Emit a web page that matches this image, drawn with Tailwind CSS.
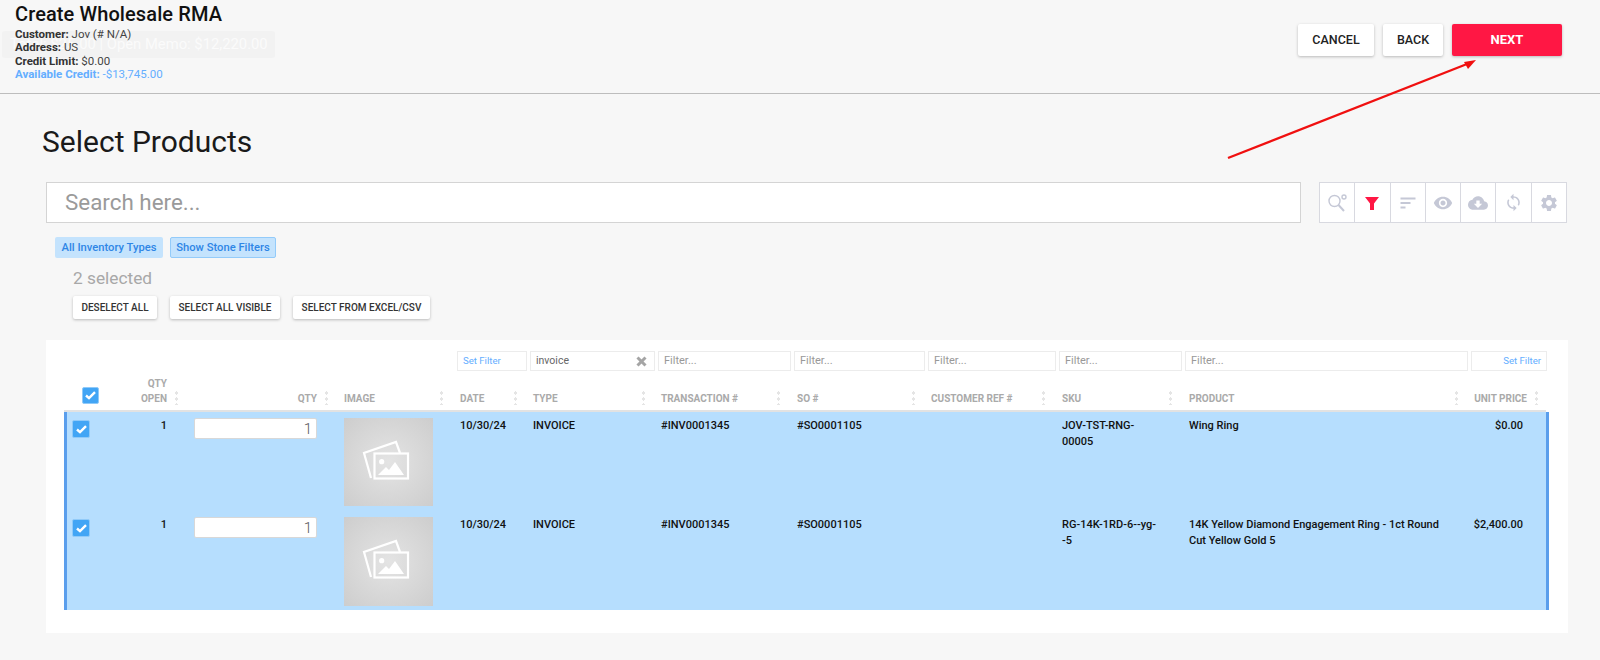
<!DOCTYPE html>
<html lang="en">
<head>
    <meta charset="UTF-8">
    <title>Create Wholesale RMA</title>
    <script src="https://cdn.jsdelivr.net/npm/@tailwindcss/browser@4"></script>
</head>
<body class="relative h-[660px] overflow-hidden bg-[#f7f7f7] font-['Roboto',sans-serif] text-[#111]">
    <!-- Page header -->
    <header class="relative flex h-[94px] justify-between border-b border-[#bdbdbd] pl-[15px] pr-[38px]">
        <div class="absolute left-[2px] top-[31px] h-[27px] w-[273px] rounded-[3px] bg-[#f2f2f2] pl-[8px] text-[14.8px] leading-[27px] text-[#fbfbfb]">Total: $25.00 | Open Memo: $12,220.00</div>
        <div class="relative pt-[3px]">
            <h2 class="text-[20px] font-medium leading-[22px] tracking-[0.1px] text-[#111]">Create Wholesale RMA</h2>
            <div class="mt-[3px] text-[11.5px] leading-[13.3px] text-[#444]">
                <p><b class="font-bold text-[#333]">Customer:</b> Jov (# N/A)</p>
                <p><b class="font-bold text-[#333]">Address:</b> US</p>
                <p><b class="font-bold text-[#333]">Credit Limit:</b> $0.00</p>
                <p class="text-[#64aeff]"><b class="font-bold">Available Credit:</b> -$13,745.00</p>
            </div>
        </div>
        <div class="flex items-start gap-[9px] pt-[24px]">
            <button class="h-[32px] w-[76px] rounded-[2px] bg-white text-[12.5px] font-medium text-[#222] shadow-[0_1px_3px_rgba(0,0,0,0.25)]">CANCEL</button>
            <button class="h-[32px] w-[60px] rounded-[2px] bg-white text-[12.5px] font-medium text-[#222] shadow-[0_1px_3px_rgba(0,0,0,0.25)]">BACK</button>
            <button class="h-[32px] w-[110px] rounded-[2px] bg-[#ff1744] text-[13px] font-bold text-white shadow-[0_1px_3px_rgba(0,0,0,0.25)]">NEXT</button>
        </div>
    </header>

    <!-- Annotation arrow -->
    <svg class="absolute left-[1220px] top-[50px]" width="270" height="115" viewBox="0 0 270 115">
        <line x1="8" y1="108" x2="247" y2="14" stroke="#f01010" stroke-width="2.4"/>
        <polygon points="256,10 244,12 248,19" fill="#f01010"/>
    </svg>

    <main class="pl-[46px] pr-[33px]">
        <h1 class="-ml-[4px] mt-[31px] text-[30px] font-normal leading-[34px] text-[#1a1a1a]">Select Products</h1>

        <div class="mt-[23px] flex justify-between">
            <input class="h-[41px] w-[1255px] border border-[#d4d4d4] bg-white pb-[1px] pl-[18px] text-[22.4px] placeholder:text-[#9a9a9a]" placeholder="Search here...">
            <div class="flex h-[41px] w-[248px] border border-[#d8d9e0] bg-white">
                <span class="flex flex-1 items-center justify-center border-r border-[#d8d9e0]">
                    <svg width="22" height="22" viewBox="0 0 22 22" fill="none" stroke="#c5c8d6" stroke-width="1.4"><circle cx="8.5" cy="9" r="5.5"/><line x1="12.5" y1="13" x2="18" y2="19" stroke-width="2"/><circle cx="18" cy="5" r="2"/></svg>
                </span>
                <span class="flex flex-1 items-center justify-center border-r border-[#d8d9e0]">
                    <svg width="14" height="14" viewBox="0 0 14 14" fill="#ff1744"><polygon points="0,1 14,1 9,7.5 9,14 5,14 5,7.5"/></svg>
                </span>
                <span class="flex flex-1 items-center justify-center border-r border-[#d8d9e0]">
                    <svg width="16" height="12" viewBox="0 0 16 12" fill="#c5c8d6"><rect x="0.5" y="0.5" width="15" height="2"/><rect x="0.5" y="5" width="10" height="2"/><rect x="0.5" y="9.5" width="5" height="2"/></svg>
                </span>
                <span class="flex flex-1 items-center justify-center border-r border-[#d8d9e0]">
                    <svg width="20" height="20" viewBox="0 0 24 24" fill="#c5c8d6"><path d="M12 4.5C7 4.5 2.73 7.61 1 12c1.73 4.39 6 7.5 11 7.5s9.27-3.11 11-7.5c-1.73-4.39-6-7.5-11-7.5zM12 17c-2.76 0-5-2.24-5-5s2.24-5 5-5 5 2.24 5 5-2.24 5-5 5zm0-8c-1.66 0-3 1.34-3 3s1.34 3 3 3 3-1.34 3-3-1.34-3-3-3z"/></svg>
                </span>
                <span class="flex flex-1 items-center justify-center border-r border-[#d8d9e0]">
                    <svg width="20" height="20" viewBox="0 0 24 24" fill="#c5c8d6"><path d="M19.35 10.04C18.67 6.59 15.64 4 12 4 9.11 4 6.6 5.64 5.35 8.04 2.34 8.36 0 10.91 0 14c0 3.31 2.69 6 6 6h13c2.76 0 5-2.24 5-5 0-2.64-2.05-4.78-4.65-4.96zM17 13l-5 5-5-5h3V9h4v4h3z"/></svg>
                </span>
                <span class="flex flex-1 items-center justify-center border-r border-[#d8d9e0]">
                    <svg width="19" height="19" viewBox="0 0 24 24" fill="#c5c8d6"><path d="M12 4V1L8 5l4 4V6c3.31 0 6 2.69 6 6 0 1.01-.25 1.97-.7 2.8l1.46 1.46C19.54 15.03 20 13.57 20 12c0-4.42-3.58-8-8-8zm0 14c-3.31 0-6-2.69-6-6 0-1.01.25-1.97.7-2.8L5.24 7.74C4.46 8.97 4 10.43 4 12c0 4.42 3.58 8 8 8v3l4-4-4-4v3z"/></svg>
                </span>
                <span class="flex flex-1 items-center justify-center">
                    <svg width="20" height="20" viewBox="0 0 24 24" fill="#c5c8d6"><path d="M19.14 12.94c.04-.3.06-.61.06-.94 0-.32-.02-.64-.07-.94l2.03-1.58c.18-.14.23-.41.12-.61l-1.92-3.32c-.12-.22-.37-.29-.59-.22l-2.39.96c-.5-.38-1.03-.7-1.62-.94l-.36-2.54c-.04-.24-.24-.41-.48-.41h-3.84c-.24 0-.43.17-.47.41l-.36 2.54c-.59.24-1.13.57-1.62.94l-2.39-.96c-.22-.08-.47 0-.59.22L2.74 8.87c-.12.21-.08.47.12.61l2.03 1.58c-.05.3-.09.63-.09.94s.02.64.07.94l-2.03 1.58c-.18.14-.23.41-.12.61l1.92 3.32c.12.22.37.29.59.22l2.39-.96c.5.38 1.03.7 1.62.94l.36 2.54c.05.24.24.41.48.41h3.84c.24 0 .44-.17.47-.41l.36-2.54c.59-.24 1.13-.56 1.62-.94l2.39.96c.22.08.47 0 .59-.22l1.92-3.32c.12-.22.07-.47-.12-.61l-2.01-1.58zM12 15.6c-1.98 0-3.6-1.62-3.6-3.6s1.62-3.6 3.6-3.6 3.6 1.62 3.6 3.6-1.62 3.6-3.6 3.6z"/></svg>
                </span>
            </div>
        </div>

        <div class="ml-[9px] mt-[14px] flex gap-[7px] text-[11.2px] font-medium text-[#2f86e6]">
            <span class="flex h-[21px] w-[108px] items-center justify-center rounded-[2px] bg-[#c4e3fd] pt-[1px]">All Inventory Types</span>
            <span class="flex h-[21px] w-[106px] items-center justify-center rounded-[2px] border border-[#93cbfa] bg-[#c4e3fd] pt-[1px]">Show Stone Filters</span>
        </div>

        <div class="ml-[27px] mt-[9px] text-[17.3px] leading-[23px] text-[#a8a8a8]">2 selected</div>

        <div class="ml-[27px] mt-[6px] flex gap-[13px] text-[10px] font-medium text-[#333]">
            <button class="h-[23px] w-[84px] rounded-[2px] bg-white shadow-[0_1px_3px_rgba(0,0,0,0.25)]">DESELECT ALL</button>
            <button class="h-[23px] w-[110px] rounded-[2px] bg-white shadow-[0_1px_3px_rgba(0,0,0,0.25)]">SELECT ALL VISIBLE</button>
            <button class="h-[23px] w-[137px] rounded-[2px] bg-white shadow-[0_1px_3px_rgba(0,0,0,0.25)]">SELECT FROM EXCEL/CSV</button>
        </div>

        <!-- Products table -->
        <section class="mt-[21px] h-[293px] w-[1522px] bg-white pl-[18px] pt-[11px]">
            <div class="ml-[393px] flex gap-[3px] text-[11px] text-[#999]">
                <span class="flex h-[20px] w-[70px] items-center border border-[#ececec] pl-[5px] text-[9.6px] text-[#64aeff]">Set Filter</span>
                <span class="flex h-[20px] w-[125px] items-center justify-between border border-[#ececec] pl-[5px] pr-[7px] text-[10.5px] text-[#666]">invoice
                    <svg width="11" height="11" viewBox="0 0 11 11" stroke="#a5a5a5" stroke-width="3"><line x1="1.5" y1="1.5" x2="9.5" y2="9.5"/><line x1="9.5" y1="1.5" x2="1.5" y2="9.5"/></svg>
                </span>
                <span class="flex h-[20px] w-[133px] items-center border border-[#ececec] pl-[5px]">Filter...</span>
                <span class="flex h-[20px] w-[131px] items-center border border-[#ececec] pl-[5px]">Filter...</span>
                <span class="flex h-[20px] w-[128px] items-center border border-[#ececec] pl-[5px]">Filter...</span>
                <span class="flex h-[20px] w-[123px] items-center border border-[#ececec] pl-[5px]">Filter...</span>
                <span class="flex h-[20px] w-[283px] items-center border border-[#ececec] pl-[5px]">Filter...</span>
                <span class="flex h-[20px] w-[76px] items-center justify-end border border-[#ececec] pr-[5px] text-[9.6px] text-[#64aeff]">Set Filter</span>
            </div>

            <!-- Column headers -->
            <div class="mt-[2px] grid h-[39px] w-[1482px] grid-cols-[46px_72px_150px_115px_74px_128px_135px_135px_130px_127px_286px_84px] items-end border-b-2 border-[#e2e2e2] pb-[4px] text-[10px] font-bold leading-[14.5px] text-[#aaa]">
                <span class="relative"><span class="absolute bottom-[2px] left-[18px] flex h-[17px] w-[17px] items-center justify-center rounded-[2px] border border-[#90caf9] bg-[#42a5f5]"><svg width="11" height="9" viewBox="0 0 11 9" fill="none" stroke="white" stroke-width="2.4"><polyline points="1,4.5 4,7.2 10,1.2"/></svg></span></span>
                <span class="relative pr-[15px] text-right">QTY<br>OPEN<i class="absolute bottom-[1px] right-[4px] h-[15px] w-[3px] bg-[radial-gradient(circle,#e5e5e5_1.5px,transparent_1.6px)] bg-[length:3px_6px]"></i></span>
                <span class="relative pr-[15px] text-right">QTY<i class="absolute bottom-[1px] right-[4px] h-[15px] w-[3px] bg-[radial-gradient(circle,#e5e5e5_1.5px,transparent_1.6px)] bg-[length:3px_6px]"></i></span>
                <span class="relative pl-[12px]">IMAGE<i class="absolute bottom-[1px] right-[4px] h-[15px] w-[3px] bg-[radial-gradient(circle,#e5e5e5_1.5px,transparent_1.6px)] bg-[length:3px_6px]"></i></span>
                <span class="relative pl-[13px]">DATE<i class="absolute bottom-[1px] right-[4px] h-[15px] w-[3px] bg-[radial-gradient(circle,#e5e5e5_1.5px,transparent_1.6px)] bg-[length:3px_6px]"></i></span>
                <span class="relative pl-[12px]">TYPE<i class="absolute bottom-[1px] right-[4px] h-[15px] w-[3px] bg-[radial-gradient(circle,#e5e5e5_1.5px,transparent_1.6px)] bg-[length:3px_6px]"></i></span>
                <span class="relative pl-[12px]">TRANSACTION #<i class="absolute bottom-[1px] right-[4px] h-[15px] w-[3px] bg-[radial-gradient(circle,#e5e5e5_1.5px,transparent_1.6px)] bg-[length:3px_6px]"></i></span>
                <span class="relative pl-[13px]">SO #<i class="absolute bottom-[1px] right-[4px] h-[15px] w-[3px] bg-[radial-gradient(circle,#e5e5e5_1.5px,transparent_1.6px)] bg-[length:3px_6px]"></i></span>
                <span class="relative pl-[12px]">CUSTOMER REF #<i class="absolute bottom-[1px] right-[4px] h-[15px] w-[3px] bg-[radial-gradient(circle,#e5e5e5_1.5px,transparent_1.6px)] bg-[length:3px_6px]"></i></span>
                <span class="relative pl-[13px]">SKU<i class="absolute bottom-[1px] right-[4px] h-[15px] w-[3px] bg-[radial-gradient(circle,#e5e5e5_1.5px,transparent_1.6px)] bg-[length:3px_6px]"></i></span>
                <span class="relative pl-[13px]">PRODUCT<i class="absolute bottom-[1px] right-[4px] h-[15px] w-[3px] bg-[radial-gradient(circle,#e5e5e5_1.5px,transparent_1.6px)] bg-[length:3px_6px]"></i></span>
                <span class="relative pr-[19px] text-right">UNIT PRICE<i class="absolute bottom-[1px] right-[8px] h-[15px] w-[3px] bg-[radial-gradient(circle,#e5e5e5_1.5px,transparent_1.6px)] bg-[length:3px_6px]"></i></span>
            </div>

            <!-- Row 1 -->
            <div class="grid h-[99px] w-[1485px] grid-cols-[46px_72px_150px_115px_74px_128px_135px_135px_130px_127px_286px_84px] border-x-[3px] border-[#5a9eec] bg-[#b6defe] pt-[6px] text-[11px] font-medium leading-[15.5px] text-[#111]">
                <span class="pl-[5px] pt-[2px]"><span class="flex h-[18px] w-[18px] items-center justify-center rounded-[2px] border border-[#90caf9] bg-[#42a5f5]"><svg width="11" height="9" viewBox="0 0 11 9" fill="none" stroke="white" stroke-width="2.4"><polyline points="1,4.5 4,7.2 10,1.2"/></svg></span></span>
                <span class="pr-[18px] text-right">1</span>
                <span class="pl-[9px]"><input class="h-[21px] w-[123px] rounded-[2px] border border-[#d8d8d8] bg-white pr-[4px] text-right text-[15px] font-light text-[#555]" value="1"></span>
                <span class="pl-[9px]">
                    <span class="block h-[88px] w-[89px] bg-radial from-[#e4e4e4] to-[#cdcdcd]">
                        <svg width="89" height="88" viewBox="0 0 89 88" fill="none" stroke="white" stroke-width="2.2"><path d="M27 60 L20 35 L52 24 L56 35"/><rect x="30.5" y="35.5" width="33.5" height="25"/><circle cx="37.7" cy="43.7" r="2.6" fill="white" stroke="none"/><path d="M34 57 L42 49 L45 52 L51 44 L60 57 Z" fill="white" stroke="none"/></svg>
                    </span>
                </span>
                <span class="pl-[10px]">10/30/24</span>
                <span class="pl-[9px]">INVOICE</span>
                <span class="pl-[9px]">#INV0001345</span>
                <span class="pl-[10px]">#SO0001105</span>
                <span></span>
                <span class="pl-[10px] pr-[20px]">JOV-TST-RNG-00005</span>
                <span class="pl-[10px] pr-[12px]">Wing Ring</span>
                <span class="pr-[26px] text-right">$0.00</span>
            </div>

            <!-- Row 2 -->
            <div class="grid h-[99px] w-[1485px] grid-cols-[46px_72px_150px_115px_74px_128px_135px_135px_130px_127px_286px_84px] border-x-[3px] border-[#5a9eec] bg-[#b6defe] pt-[6px] text-[11px] font-medium leading-[15.5px] text-[#111]">
                <span class="pl-[5px] pt-[2px]"><span class="flex h-[18px] w-[18px] items-center justify-center rounded-[2px] border border-[#90caf9] bg-[#42a5f5]"><svg width="11" height="9" viewBox="0 0 11 9" fill="none" stroke="white" stroke-width="2.4"><polyline points="1,4.5 4,7.2 10,1.2"/></svg></span></span>
                <span class="pr-[18px] text-right">1</span>
                <span class="pl-[9px]"><input class="h-[21px] w-[123px] rounded-[2px] border border-[#d8d8d8] bg-white pr-[4px] text-right text-[15px] font-light text-[#555]" value="1"></span>
                <span class="pl-[9px]">
                    <span class="block h-[89px] w-[89px] bg-radial from-[#e4e4e4] to-[#cdcdcd]">
                        <svg width="89" height="88" viewBox="0 0 89 88" fill="none" stroke="white" stroke-width="2.2"><path d="M27 60 L20 35 L52 24 L56 35"/><rect x="30.5" y="35.5" width="33.5" height="25"/><circle cx="37.7" cy="43.7" r="2.6" fill="white" stroke="none"/><path d="M34 57 L42 49 L45 52 L51 44 L60 57 Z" fill="white" stroke="none"/></svg>
                    </span>
                </span>
                <span class="pl-[10px]">10/30/24</span>
                <span class="pl-[9px]">INVOICE</span>
                <span class="pl-[9px]">#INV0001345</span>
                <span class="pl-[10px]">#SO0001105</span>
                <span></span>
                <span class="pl-[10px] pr-[20px]">RG-14K-1RD-6--yg--5</span>
                <span class="pl-[10px] pr-[12px]">14K Yellow Diamond Engagement Ring - 1ct Round Cut Yellow Gold 5</span>
                <span class="pr-[26px] text-right">$2,400.00</span>
            </div>
        </section>
    </main>
</body>
</html>
